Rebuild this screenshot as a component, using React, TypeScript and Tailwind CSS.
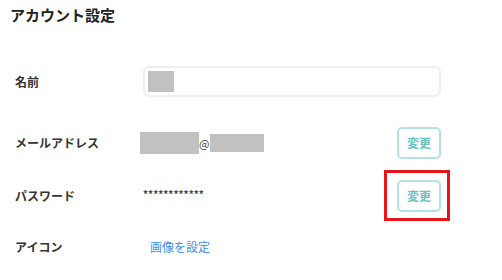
const font = { fontFamily: '"Noto Sans CJK JP", "Noto Sans", sans-serif' };

function ChangeButton({ highlighted }: { highlighted?: boolean }) {
  return (
    <div className="relative">
      <button className="w-[44px] h-8 rounded-[5px] border-2 border-[#b3e2e0] bg-white text-[12px] font-bold text-[#6cc3bf] leading-none">
        変更
      </button>
      {highlighted && (
        <div className="absolute left-[-13px] right-[-9px] top-[-10px] bottom-[-9px] border-[3px] border-[#e8141c] pointer-events-none" />
      )}
    </div>
  );
}

export default function App() {
  return (
    <div className="w-[502px] h-[280px] bg-white text-[#333]" style={font}>
      <div className="h-[30px] flex items-center pl-[10px]">
        <h1 className="text-[15px] font-bold text-[#222]">アカウント設定</h1>
      </div>

      <div className="pl-[15px] pr-[61px]">
        {/* name */}
        <div className="mt-[36px] h-[31px] flex items-center">
          <div className="w-[128px] text-[12px] font-bold">名前</div>
          <div className="flex-1 h-full rounded-[6px] border-2 border-[#efefef] flex items-center px-[3px]">
            <div className="w-[26px] h-[21px] bg-[#c1c1c1]" />
          </div>
        </div>

        {/* mail */}
        <div className="mt-[30px] h-8 flex items-center">
          <div className="w-[125px] text-[12px] font-bold">メールアドレス</div>
          <div className="flex-1 flex items-center">
            <div className="w-[59px] h-[22px] bg-[#c1c1c1]" />
            <span className="w-[11px] text-[11px] text-[#444]">@</span>
            <div className="w-[54px] h-[18px] bg-[#c1c1c1]" />
          </div>
          <ChangeButton />
        </div>

        {/* password */}
        <div className="mt-[21px] h-8 flex items-center">
          <div className="w-[128px] text-[12px] font-bold">パスワード</div>
          <div className="flex-1 text-[10px] font-bold text-[#444] -mt-[6px]">************</div>
          <ChangeButton highlighted />
        </div>

        {/* icon */}
        <div className="mt-[25px] h-5 flex items-center">
          <div className="w-[135px] text-[12px] font-bold">アイコン</div>
          <a className="text-[12px] text-[#3d8ff0]">画像を設定</a>
        </div>
      </div>
    </div>
  );
}
